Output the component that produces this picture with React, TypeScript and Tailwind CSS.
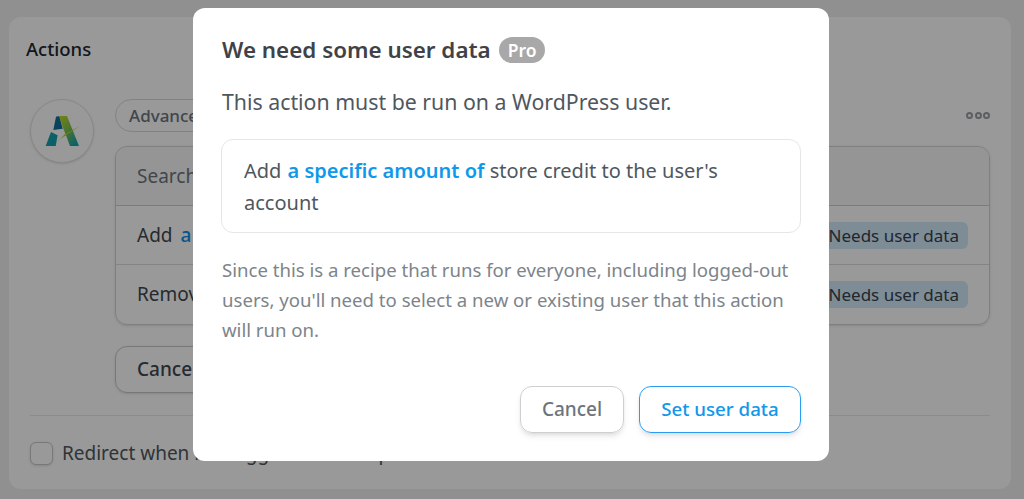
function Logo() {
  return (
    <svg width="35" height="32" viewBox="70 78 105 94">
      <defs>
        <linearGradient id="leg" x1="0.2" y1="0" x2="0.7" y2="1">
          <stop offset="0" stopColor="#b8d62e" />
          <stop offset="0.45" stopColor="#7fc24f" />
          <stop offset="1" stopColor="#14a5ad" />
        </linearGradient>
      </defs>
      <path d="M103 82 L113 80 L123 118 L95 122 Z" fill="#0f6e9a" />
      <path d="M72 170 L88 128 L108 138 L102 170 Z" fill="#14a0ad" />
      <path d="M112 80 L136 80 L172 170 L145 170 L133 138 L125 118 Z" fill="url(#leg)" />
      <path d="M107 155 L175 110 L130 134 L113 152 Z" fill="#b5d42f" />
    </svg>
  )
}

function Row({ children, last }: { children: React.ReactNode; last?: boolean }) {
  return (
    <div className={`flex h-[59px] items-center justify-between pl-[21px] pr-[21px] ${last ? "" : "border-b border-[#dcdcdc]"}`}>
      <span className="text-[19px] text-[#40484f]">{children}</span>
      <span className="rounded-md bg-[#d2e9fb] px-[9px] py-[1px] text-[17px] leading-[25px] text-[#37414a]">Needs user data</span>
    </div>
  )
}

export default function App() {
  return (
    <div className="relative h-[499px] w-[1024px] overflow-hidden bg-[#f0f0f0] pl-[9px] pr-[13px] pt-[17px] font-['Noto_Sans','Open_Sans',sans-serif]">
      <div className="h-[472px] rounded-xl bg-white px-[21px]">
        <div className="-ml-[4px] pt-[18px] text-[18.5px] font-medium leading-[28px] text-[#20272d]">Actions</div>
        <div className="mt-[36px] flex gap-[21px]">
          <div className="flex h-[64px] w-[64px] shrink-0 items-center justify-center rounded-full border border-[#e4e4e4] bg-white shadow-sm">
            <Logo />
          </div>
          <div className="min-w-0 flex-1">
            <div className="flex items-center justify-between">
              <div className="flex h-[33px] items-center rounded-full border border-[#d9d9d9] pl-[13px] pr-4 text-[17px] font-medium text-[#6d757c]">Advanced</div>
              <div className="flex gap-[1.5px]">
                <span className="h-[7px] w-[7px] rounded-full border-2 border-[#9a9fa4]" />
                <span className="h-[7px] w-[7px] rounded-full border-2 border-[#9a9fa4]" />
                <span className="h-[7px] w-[7px] rounded-full border-2 border-[#9a9fa4]" />
              </div>
            </div>
            <div className="mt-[14px] rounded-xl border border-[#d4d4d4] shadow-sm">
              <div className="flex h-[59px] items-center rounded-t-xl border-b border-[#cfcfcf] bg-[#f9f9f9] pl-[21px] text-[19px] text-[#6d757c]">Search</div>
              <Row>Add <span className="ml-[3px] font-medium text-[#0790e8]">a specific amount of</span> store credit</Row>
              <Row last>Remove store credit</Row>
            </div>
            <button className="mt-[21px] flex h-[47px] w-[120px] items-center rounded-xl border border-[#c8c8c8] pl-[21px] text-[19px] font-medium text-[#40484f] shadow-sm">Cancel</button>
          </div>
        </div>
        <div className="mt-[22px] border-t border-[#e8e8e8]" />
        <label className="mt-[25px] flex items-center gap-[9px]">
          <span className="h-[23px] w-[23px] rounded-md border border-[#c8c8c8] bg-white shadow-sm" />
          <span className="text-[19px] leading-[24px] text-[#4f575e]">Redirect when not logged in on recipe</span>
        </label>
      </div>

      <div className="absolute inset-0 bg-black/40" />

      <div className="absolute left-[193px] top-[8px] h-[453px] w-[636px] rounded-xl bg-white px-[28px] pt-[27px]">
        <div className="ml-px flex items-center gap-[8px]">
          <h2 className="text-[22.4px] font-semibold leading-[30px] text-[#3f4347]">We need some user data</h2>
          <span className="rounded-full bg-[#a8a8a8] px-[9px] text-[17.5px] font-semibold leading-[26px] text-white">Pro</span>
        </div>
        <p className="ml-px mt-[23px] text-[21.3px] leading-[28px] text-[#4f575e]">This action must be run on a WordPress user.</p>
        <div className="mt-[23px] rounded-xl border border-[#e6e6e6] pb-[13px] pl-[22px] pr-[60px] pt-[15px] text-[20px] leading-[32px] text-[#4f575e]">
          Add <span className="ml-px font-semibold text-[#1098ea]">a specific amount of</span> store credit to the user's account
        </div>
        <p className="ml-px mt-[22px] text-[18.6px] leading-[30px] text-[#7d848a]">
          Since this is a recipe that runs for everyone, including logged-out users, you'll need to select a new or existing user that this action will run on.
        </p>
        <div className="mt-[41px] flex justify-end gap-[15px]">
          <button className="h-[47px] w-[104px] rounded-xl border border-[#cfcfcf] text-[19px] font-medium text-[#6d757c] shadow-md">Cancel</button>
          <button className="h-[47px] w-[162px] rounded-xl border border-[#2a9df0] text-[18.7px] font-medium text-[#1098ea] shadow-md">Set user data</button>
        </div>
      </div>
    </div>
  )
}
